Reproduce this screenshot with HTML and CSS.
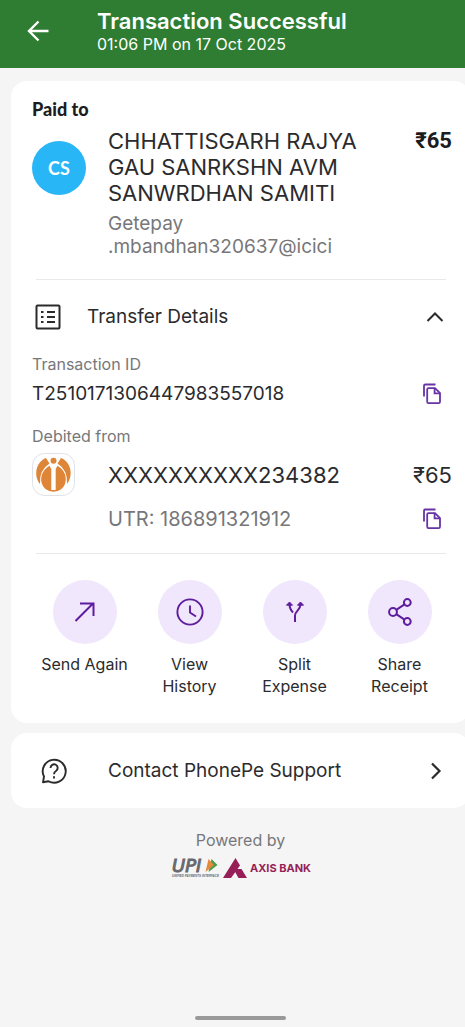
FILE: index.html
```html
<!DOCTYPE html>
<html lang="en">
<head>
<meta charset="utf-8">
<meta name="viewport" content="width=device-width, initial-scale=1">
<title>Transaction Successful</title>
<link rel="stylesheet" href="styles.css">
</head>
<body>
<div class="screen">
  <header class="topbar">
    <button class="icon-btn back" aria-label="Back">
      <svg width="22" height="22" viewBox="0 0 22 22" fill="none" stroke="currentColor" stroke-width="2.400"><path d="M21.500 11H2M11.500 1.500L2 11l9.500 9.500"/></svg>
    </button>
    <div>
      <h1 class="title">Transaction Successful</h1>
      <p class="time">01:06 PM on 17 Oct 2025</p>
    </div>
  </header>

  <main class="content">
    <section class="card details">
      <h2 class="paid-to">Paid to</h2>
      <div class="payee">
        <div class="avatar">CS</div>
        <div class="payee-info">
          <p class="name">CHHATTISGARH RAJYA<br>GAU SANRKSHN AVM<br>SANWRDHAN SAMITI</p>
          <p class="vpa">Getepay<br>.mbandhan320637@icici</p>
        </div>
        <p class="amount-bold">₹65</p>
      </div>
      <hr class="rule">
      <button class="toggle" aria-expanded="true">
        <svg width="26" height="26" viewBox="0 0 26 26" fill="none" stroke="currentColor" stroke-width="2"><rect x="1.500" y="1.500" width="23" height="23" rx="1"/><path d="M6 8h2.500M6 13h2.500M6 18h2.500M12 8h8M12 13h8M12 18h8"/></svg>
        <span class="toggle-label">Transfer Details</span>
        <svg width="18" height="12" viewBox="0 0 18 12" fill="none" stroke="currentColor" stroke-width="2"><path d="M1.500 10L9 2.500l7.500 7.500"/></svg>
      </button>
      <p class="label">Transaction ID</p>
      <div class="id-row">
        <p class="txn">T2510171306447983557018</p>
        <button class="icon-btn copy" aria-label="Copy transaction ID">
          <svg width="20" height="22" viewBox="0 0 20 22" fill="none" stroke="currentColor" stroke-width="1.800"><path d="M2 13.500V2.800Q2 1.500 3.300 1.500H13.500"/><path d="M6.500 5.200H13l5 5v8.600q0 1.400-1.400 1.400H6.500q-1.300 0-1.300-1.400V6.500q0-1.300 1.300-1.300z"/><path d="M12.600 5.200v5.200H18"/></svg>
        </button>
      </div>
      <p class="label debited">Debited from</p>
      <div class="bank-row">
        <svg class="bank" width="43" height="43" viewBox="0 0 43 43" role="img" aria-label="Bank"><rect x=".5" y=".5" width="42" height="42" rx="12" fill="#fff" stroke="#dfe2e8"/><path d="M14 5C3.500 9 1.500 23 8 31Q7 17 17.500 10.500zM29 5C39.500 9 41.500 23 35 31Q36 17 25.500 10.500z" fill="#df8538"/><path d="M19.300 16L17.500 12.800C8 18 6.500 30 13.500 36Q17 38.800 21.500 38.800T29.500 36C36.500 30 35 18 25.500 12.800L23.700 16V37h-4.400z" fill="#df8538"/><circle cx="21.500" cy="7.800" r="3" fill="#df8538"/></svg>
        <p class="account">XXXXXXXXXX234382</p>
        <p class="account">₹65</p>
      </div>
      <div class="utr-row">
        <p class="utr">UTR: 186891321912</p>
        <button class="icon-btn copy" aria-label="Copy UTR">
          <svg width="20" height="22" viewBox="0 0 20 22" fill="none" stroke="currentColor" stroke-width="1.800"><path d="M2 13.500V2.800Q2 1.500 3.300 1.500H13.500"/><path d="M6.500 5.200H13l5 5v8.600q0 1.400-1.400 1.400H6.500q-1.300 0-1.300-1.400V6.500q0-1.300 1.300-1.300z"/><path d="M12.600 5.200v5.200H18"/></svg>
        </button>
      </div>
      <hr class="rule">
      <nav class="actions">
        <button class="action">
          <span class="bubble"><svg width="28" height="28" viewBox="0 0 28 28" fill="none" stroke="currentColor" stroke-width="2"><path d="M4.500 23L22 5.500M9 5.500h13.500V18"/></svg></span>
          <span>Send Again</span>
        </button>
        <button class="action">
          <span class="bubble"><svg width="28" height="28" viewBox="0 0 28 28" fill="none" stroke="currentColor" stroke-width="1.900"><circle cx="14" cy="14" r="12.600"/><path d="M14 7.500v7l6 4"/></svg></span>
          <span>View<br>History</span>
        </button>
        <button class="action">
          <span class="bubble"><svg width="28" height="28" viewBox="0 0 28 28" fill="none" stroke="currentColor" stroke-width="2"><path d="M14 24v-6.500c0-4.500 5.500-5 5.500-11.500M8.500 6c0 4 1 6 3.500 8.500"/><path d="M19.500 4l3 3.200h-6zM8.500 4l3 3.200h-6z" fill="currentColor" stroke-width="1"/></svg></span>
          <span>Split<br>Expense</span>
        </button>
        <button class="action">
          <span class="bubble"><svg width="28" height="28" viewBox="0 0 28 28" fill="none" stroke="currentColor" stroke-width="2"><circle cx="7" cy="14" r="3.900"/><circle cx="21.300" cy="4.500" r="3.400"/><circle cx="21.300" cy="23.500" r="3.400"/><path d="M10.300 11.800l8.200-5.400M10.300 16.200l8.200 5.400"/></svg></span>
          <span>Share<br>Receipt</span>
        </button>
      </nav>
    </section>

    <a class="card support" href="#support">
      <svg width="26" height="26" viewBox="0 0 26 26" fill="none" stroke="currentColor" stroke-width="1.900"><path d="M2 24.300L3 18.500A11.500 11.500 0 1 1 7.500 23.200z" stroke-linejoin="round"/><path d="M9.500 10a3.600 3.600 0 1 1 5.500 3q-2 1.200-2 3.200M13 18.300v2.200"/></svg>
      <span class="support-label">Contact PhonePe Support</span>
      <svg width="12" height="18" viewBox="0 0 12 18" fill="none" stroke="currentColor" stroke-width="2.200"><path d="M2 1.500L9.500 9 2 16.500"/></svg>
    </a>

    <footer class="powered">
      <p class="powered-label">Powered by</p>
      <div class="logos">
        <svg width="50" height="30" viewBox="0 -4 50 30" role="img" aria-label="UPI"><text class="upi" x="2" y="15">UPI</text><path d="M41.500 2l6 6-9 7z" fill="#4a9b4c"/><path d="M38.500 2l5.500 6-8.500 7z" fill="#e58a3c"/><text class="upi-tag" x="2" y="20">UNIFIED PAYMENTS INTERFACE</text></svg>
        <svg width="24" height="22" viewBox="0 0 24 22" fill="#971f57" aria-hidden="true"><path d="M12.500 1L17 8.500 8 21H0z"/><path d="M10.500 12h8l5.500 9h-8.500z"/></svg>
        <span class="axis">AXIS BANK</span>
      </div>
    </footer>
  </main>
  <div class="gesture"></div>
</div>
</body>
</html>
```
FILE: styles.css
```css
* { box-sizing: border-box; }
body {
  margin: 0;
  overflow-x: hidden;
  background: #f5f5f5;
  color: #2b2b2d;
  font-family: Inter, "Liberation Sans", sans-serif;
}
h1, h2, p { margin: 0; }
svg { display: block; flex: none; }
button {
  margin: 0;
  padding: 0;
  border: 0;
  background: none;
  color: inherit;
  font: inherit;
  cursor: pointer;
}
/* The right edge of the cards runs just past the viewport. */
.screen {
  display: flex;
  flex-direction: column;
  width: calc(100% + 16px);
  min-height: 100vh;
}
.topbar {
  display: flex;
  gap: 48px;
  height: 68px;
  padding: 9px 27px;
  background: #2e7d32;
  color: #fff;
}
.back { align-self: flex-start; padding-top: 11px; }
.title { font-size: 22px; line-height: 24px; font-weight: 600; }
.time { font-size: 16px; line-height: 22px; }
.content {
  display: flex;
  flex-direction: column;
  gap: 10px;
  padding: 13px 11px 0;
}
.card { border-radius: 16px; background: #fff; }
.details { padding: 16px 18px 26px 21px; }
.paid-to { font: 900 18px/24px Lato, sans-serif; color: #1c1c1e; }
.payee { display: flex; padding-top: 7px; }
.avatar {
  display: grid;
  place-items: center;
  width: 54px;
  height: 54px;
  margin-top: 13px;
  border-radius: 50%;
  background: #29b6f6;
  color: #fff;
  font: 700 18px/24px Lato, sans-serif;
}
.payee-info { flex: 1; padding-left: 22px; }
.name { font-size: 22px; line-height: 26px; }
.vpa { padding-top: 6px; font-size: 19px; line-height: 23px; color: #77777a; }
.amount-bold { font: 700 22px/26px Roboto, sans-serif; color: #1c1c1e; }
.rule { height: 1px; margin: 21px 6px 0 4px; border: 0; background: #e9e9e9; }
.toggle {
  display: flex;
  align-items: center;
  width: 100%;
  padding: 24px 8px 23px 3px;
  text-align: left;
}
.toggle-label { flex: 1; padding-left: 26px; font-size: 19px; line-height: 26px; }
.label { font-size: 16px; line-height: 22px; color: #77777a; }
.id-row, .utr-row { display: flex; align-items: center; justify-content: space-between; }
.id-row { padding-top: 6px; }
.txn { font-size: 19px; line-height: 26px; }
.copy { margin-right: 10px; color: #6733a5; }
.debited { padding-top: 18px; }
.bank-row { display: flex; align-items: center; padding-top: 6px; }
.account { font-size: 22px; line-height: 26px; }
.bank + .account { flex: 1; padding-left: 33px; }
.utr-row { padding: 10px 0 0 76px; }
.utr { font-size: 20px; line-height: 26px; color: #77777a; }
.actions { display: grid; grid-template-columns: repeat(4, 1fr); padding-top: 26px; }
.action {
  display: flex;
  flex-direction: column;
  align-items: center;
  gap: 9px;
  font-size: 16px;
  line-height: 22px;
}
.bubble {
  display: grid;
  place-items: center;
  width: 64px;
  height: 64px;
  border-radius: 50%;
  background: #f1e7fc;
  color: #5e1d9e;
}
.support {
  display: flex;
  align-items: center;
  padding: 24px 28px 24px 30px;
  color: inherit;
  text-decoration: none;
}
.support-label { flex: 1; padding-left: 41px; font-size: 19px; line-height: 27px; }
.powered { padding-top: 11px; text-align: center; }
.powered-label { font-size: 16px; line-height: 22px; color: #77777a; }
.logos { display: flex; align-items: center; justify-content: center; gap: 3px; padding-top: 2px; }
.upi { font: italic 400 18px "DejaVu Sans", sans-serif; fill: #68686b; stroke: #68686b; stroke-width: 1px; }
.upi-tag { font: italic 700 3px "Liberation Sans", sans-serif; fill: #68686b; }
.axis { font-size: 11px; line-height: 18px; font-weight: 700; color: #971f57; }
.gesture {
  width: 91px;
  height: 4px;
  margin: auto auto 7px;
  border-radius: 2px;
  background: #999;
}
```
